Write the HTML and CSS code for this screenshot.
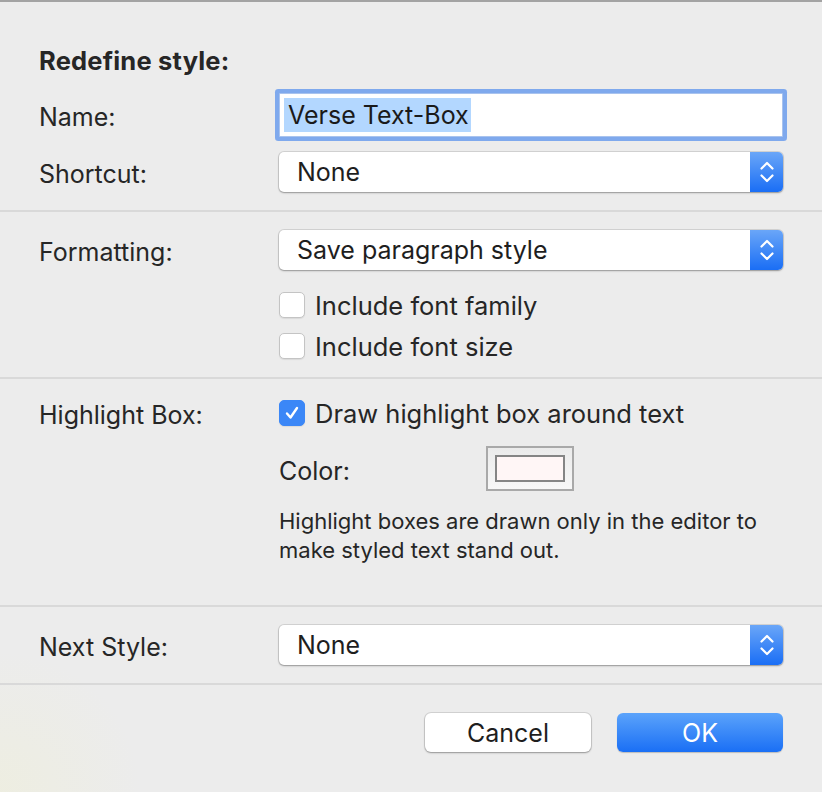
FILE: index.html
```html
<!DOCTYPE html>
<html>
<head>
    <title>Redefine Style</title>
    <link rel="stylesheet" href="styles.css">
</head>
<body>
    <div class="dialog">

        <div class="section first">
            <h2 class="heading">Redefine style:</h2>
            <div class="row name-row">
                <label class="label">Name:</label>
                <div class="textfield"><span class="selected">Verse Text-Box</span></div>
            </div>
            <div class="row popup-row">
                <label class="label">Shortcut:</label>
                <div class="popup">
                    <span class="popup-text">None</span>
                    <span class="stepper">
                        <svg width="16" height="26" viewBox="0 0 16 26"><path d="M2.5 9.5 L8 4 L13.5 9.5 M2.5 16.5 L8 22 L13.5 16.5" fill="none" stroke="#fff" stroke-width="2.2" stroke-linecap="round" stroke-linejoin="round"/></svg>
                    </span>
                </div>
            </div>
        </div>

        <div class="section formatting">
            <div class="row popup-row">
                <label class="label">Formatting:</label>
                <div class="popup">
                    <span class="popup-text">Save paragraph style</span>
                    <span class="stepper">
                        <svg width="16" height="26" viewBox="0 0 16 26"><path d="M2.5 9.5 L8 4 L13.5 9.5 M2.5 16.5 L8 22 L13.5 16.5" fill="none" stroke="#fff" stroke-width="2.2" stroke-linecap="round" stroke-linejoin="round"/></svg>
                    </span>
                </div>
            </div>
            <div class="checks">
                <div class="check"><span class="box"></span>Include font family</div>
                <div class="check"><span class="box"></span>Include font size</div>
            </div>
        </div>

        <div class="section highlight">
            <div class="row check-row">
                <label class="label">Highlight Box:</label>
                <div class="check"><span class="box checked">
                    <svg width="18" height="18" viewBox="0 0 18 18"><path d="M4 9.5 L7.5 13.5 L14 4" fill="none" stroke="#fff" stroke-width="2.4" stroke-linecap="round" stroke-linejoin="round"/></svg>
                </span>Draw highlight box around text</div>
            </div>
            <div class="color-row">
                <span class="color-label">Color:</span>
                <span class="well"><span class="swatch"></span></span>
            </div>
            <p class="help">Highlight boxes are drawn only in the editor to<br>make styled text stand out.</p>
        </div>

        <div class="section next">
            <div class="row popup-row">
                <label class="label">Next Style:</label>
                <div class="popup">
                    <span class="popup-text">None</span>
                    <span class="stepper">
                        <svg width="16" height="26" viewBox="0 0 16 26"><path d="M2.5 9.5 L8 4 L13.5 9.5 M2.5 16.5 L8 22 L13.5 16.5" fill="none" stroke="#fff" stroke-width="2.2" stroke-linecap="round" stroke-linejoin="round"/></svg>
                    </span>
                </div>
            </div>
        </div>

        <div class="buttons">
            <button class="btn cancel">Cancel</button>
            <button class="btn ok">OK</button>
        </div>

    </div>
</body>
</html>
```

FILE: styles.css
```css
html, body {
    margin: 0;
    height: 100%;
}

body {
    background-color: #ececec;
    background-image: radial-gradient(circle at 0 100%, rgba(238, 238, 222, 0.8) 0, rgba(236, 236, 236, 0) 140px);
    font-family: Inter, "Noto Sans", sans-serif;
    color: #262626;
    border-top: 2px solid #a3a3a3;
    box-sizing: border-box;
}

.dialog {
    width: 822px;
}

.section {
    padding: 18px 39px;
    border-bottom: 2px solid #d9d9d9;
}

.section.first {
    padding-top: 44px;
}

.heading {
    margin: 0 0 17px 0;
    font-size: 25.5px;
    line-height: 30px;
    font-weight: 700;
    letter-spacing: 0.2px;
}

.row {
    display: grid;
    grid-template-columns: 240px 1fr;
    align-items: center;
}

.label {
    font-size: 25px;
    padding-top: 4px;
}

.name-row {
    height: 44px;
    margin-bottom: 15px;
}

.textfield {
    height: 44px;
    box-sizing: border-box;
    background: #fff;
    border: 1px solid #a9c3ee;
    box-shadow: 0 0 0 4px #7fa9ed;
    border-radius: 1px;
    display: flex;
    align-items: center;
    padding-left: 4px;
    font-size: 25px;
    color: #1a1a1a;
}

.selected {
    background: #b3d7ff;
    padding: 0 2px 0 4px;
    line-height: 34px;
}

.popup-row {
    height: 40px;
}

.popup {
    height: 40px;
    background: #fff;
    border-radius: 5px;
    box-shadow: 0 0 0 1px rgba(0, 0, 0, 0.1), 0 1px 2px rgba(0, 0, 0, 0.3);
    display: flex;
    align-items: center;
    justify-content: space-between;
    font-size: 25px;
    color: #1e1e1e;
}

.popup-text {
    padding-left: 18px;
}

.stepper {
    width: 33px;
    height: 40px;
    border-radius: 0 5px 5px 0;
    background: linear-gradient(#6aa6f8, #1a6ef5);
    display: flex;
    align-items: center;
    justify-content: center;
}

.stepper svg {
    display: block;
}

.checks {
    margin: 22px 0 0 240px;
    display: flex;
    flex-direction: column;
    gap: 15px;
}

.check {
    display: flex;
    align-items: center;
    height: 26px;
    font-size: 25.5px;
}

.box {
    width: 26px;
    height: 26px;
    box-sizing: border-box;
    border: 1px solid #c4c4c4;
    border-radius: 5px;
    background: #fff;
    box-shadow: 0 1px 1px rgba(0, 0, 0, 0.08);
    margin-right: 10px;
    flex-shrink: 0;
    display: flex;
    align-items: center;
    justify-content: center;
}

.box.checked {
    background: #3b87f7;
    border-color: #3b87f7;
}

.highlight {
    padding-top: 17px;
    padding-bottom: 40px;
}

.check-row {
    height: 27px;
}

.color-row {
    margin: 23px 0 0 240px;
    display: flex;
    align-items: center;
}

.color-label {
    width: 207px;
    font-size: 25px;
    padding-top: 4px;
}

.well {
    width: 88px;
    height: 45px;
    box-sizing: border-box;
    border: 2px solid #a9a9a9;
    background: linear-gradient(#ebebeb, #f7f7f7);
    display: flex;
    align-items: center;
    justify-content: center;
}

.swatch {
    width: 70px;
    height: 27px;
    box-sizing: border-box;
    border: 2px solid #858585;
    background: #fff6f6;
}

.help {
    margin: 16px 0 0 240px;
    font-size: 22px;
    line-height: 29px;
}

.buttons {
    display: flex;
    justify-content: flex-end;
    gap: 26px;
    padding: 28px 39px 0 39px;
}

.btn {
    width: 166px;
    height: 39px;
    border: none;
    border-radius: 6px;
    font-family: Inter, "Noto Sans", sans-serif;
    font-size: 25px;
    cursor: pointer;
}

.cancel {
    background: #fff;
    color: #1e1e1e;
    box-shadow: 0 0 0 1px rgba(0, 0, 0, 0.1), 0 1px 2px rgba(0, 0, 0, 0.3);
}

.ok {
    background: linear-gradient(#5ba3fb, #1a6ff5);
    color: #fff;
    box-shadow: 0 1px 1px rgba(0, 0, 0, 0.2);
}
```
